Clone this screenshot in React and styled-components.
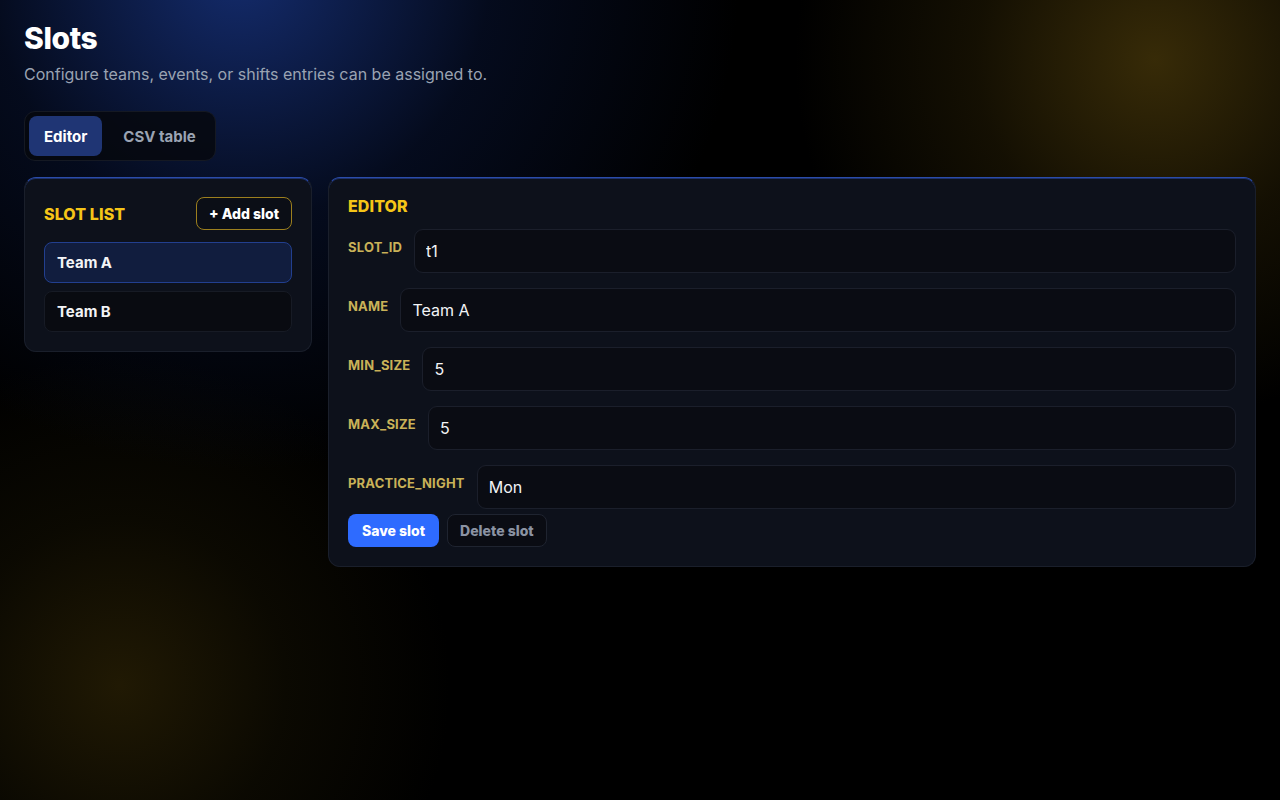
import React, { useState } from "react";
import styled, { createGlobalStyle } from "styled-components";

const GlobalStyle = createGlobalStyle`
  * { box-sizing: border-box; }
  html, body { margin: 0; padding: 0; background: #000; }
  body {
    font-family: Inter, "Noto Sans", "Liberation Sans", sans-serif;
    color: #f3f4f6;
    -webkit-font-smoothing: antialiased;
  }
`;

const Page = styled.div`
  min-height: 800px;
  padding: 20px 24px 24px;
  background:
    radial-gradient(circle 500px at 240px -30px, rgba(22, 48, 120, 0.9), rgba(10, 24, 64, 0.45) 50%, transparent 100%),
    radial-gradient(circle 360px at 1155px 60px, rgba(58, 45, 8, 0.95), rgba(40, 31, 5, 0.5) 50%, transparent 100%),
    radial-gradient(circle 330px at 120px 685px, rgba(36, 28, 4, 0.9), rgba(22, 18, 3, 0.5) 50%, transparent 100%),
    #000;
`;

const Title = styled.h1`
  margin: 0;
  font-size: 30px;
  line-height: 36px;
  font-weight: 800;
  color: #fff;
  letter-spacing: -0.4px;
`;

const Subtitle = styled.p`
  margin: 7px 0 0;
  font-size: 16px;
  line-height: 22px;
  color: #9aa3b2;
`;

const Tabs = styled.div`
  display: inline-flex;
  gap: 6px;
  margin-top: 26px;
  padding: 4px;
  border: 1px solid #151923;
  border-radius: 11px;
  background: rgba(6, 8, 14, 0.85);
`;

const Tab = styled.button`
  height: 40px;
  padding: 0 15px;
  border: none;
  border-radius: 8px;
  font-family: inherit;
  font-size: 15px;
  font-weight: 700;
  cursor: pointer;
  background: ${(p) => (p.$active ? "#1f3574" : "transparent")};
  color: ${(p) => (p.$active ? "#ffffff" : "#9aa3b2")};
`;

const Grid = styled.div`
  display: grid;
  grid-template-columns: 288px 1fr;
  gap: 16px;
  align-items: start;
  margin-top: 16px;
`;

const Card = styled.section`
  background: #0d111b;
  border: 1px solid #1a1f2b;
  border-top-color: #2b4cab;
  box-shadow: inset 0 1px 0 rgba(43, 76, 171, 0.55);
  border-radius: 12px;
  padding: 19px;
  display: flex;
  flex-direction: column;
`;

const CardHeader = styled.div`
  display: flex;
  align-items: center;
  justify-content: space-between;
`;

const Heading = styled.h2`
  margin: 0;
  font-size: 16px;
  line-height: 18px;
  font-weight: 800;
  color: #f5c518;
  letter-spacing: 0.1px;
  text-transform: uppercase;
`;

const OutlineButton = styled.button`
  height: 33px;
  padding: 0 12px;
  border-radius: 8px;
  border: 1px solid ${(p) => (p.$tone === "gold" ? "#9c7f1e" : "#1f2430")};
  background: ${(p) => (p.$tone === "gold" ? "#0b0e16" : "#0a0c13")};
  color: ${(p) => (p.$tone === "gold" ? "#ffffff" : "#8b93a3")};
  font-family: inherit;
  font-size: 14px;
  font-weight: 800;
  cursor: pointer;
`;

const PrimaryButton = styled.button`
  height: 33px;
  padding: 0 14px;
  border-radius: 8px;
  border: none;
  background: #2e6bff;
  color: #fff;
  font-family: inherit;
  font-size: 14px;
  font-weight: 800;
  cursor: pointer;
`;

const SlotList = styled.div`
  display: flex;
  flex-direction: column;
  gap: 8px;
  margin-top: 12px;
`;

const SlotItem = styled.button`
  height: 41px;
  padding: 0 12px;
  text-align: left;
  border-radius: 8px;
  border: 1px solid ${(p) => (p.$active ? "#223f8f" : "#171b25")};
  background: ${(p) => (p.$active ? "#111d3e" : "#090b11")};
  color: #f3f4f6;
  font-family: inherit;
  font-size: 15px;
  font-weight: 700;
  cursor: pointer;
`;

const Form = styled.div`
  display: flex;
  flex-direction: column;
  gap: 15px;
  margin-top: 14px;
`;

const Row = styled.label`
  display: flex;
  align-items: flex-start;
  gap: 12px;
`;

const FieldLabel = styled.span`
  padding-top: 11px;
  font-size: 13px;
  line-height: 14px;
  font-weight: 700;
  letter-spacing: 0.2px;
  color: #c9b258;
  white-space: nowrap;
`;

const Input = styled.input`
  flex: 1;
  min-width: 0;
  height: 44px;
  padding: 0 11px;
  border-radius: 9px;
  border: 1px solid #1b1f2b;
  background: #0a0c13;
  color: #f3f4f6;
  font-family: inherit;
  font-size: 16px;
  outline: none;
`;

const Actions = styled.div`
  display: flex;
  gap: 8px;
  margin-top: 5px;
`;

const fields = [
  ["slot_id", "t1"],
  ["name", "Team A"],
  ["min_size", "5"],
  ["max_size", "5"],
  ["practice_night", "Mon"],
];

export default function App() {
  const [tab, setTab] = useState("editor");
  const [selected, setSelected] = useState("Team A");
  const [values, setValues] = useState(Object.fromEntries(fields));

  return (
    <>
      <GlobalStyle />
      <Page>
        <Title>Slots</Title>
        <Subtitle>Configure teams, events, or shifts entries can be assigned to.</Subtitle>
        <Tabs>
          <Tab $active={tab === "editor"} onClick={() => setTab("editor")}>Editor</Tab>
          <Tab $active={tab === "csv"} onClick={() => setTab("csv")}>CSV table</Tab>
        </Tabs>
        <Grid>
          <Card>
            <CardHeader>
              <Heading>Slot list</Heading>
              <OutlineButton $tone="gold">+ Add slot</OutlineButton>
            </CardHeader>
            <SlotList>
              {["Team A", "Team B"].map((t) => (
                <SlotItem key={t} $active={selected === t} onClick={() => setSelected(t)}>
                  {t}
                </SlotItem>
              ))}
            </SlotList>
          </Card>
          <Card>
            <Heading>Editor</Heading>
            <Form>
              {fields.map(([key]) => (
                <Row key={key}>
                  <FieldLabel>{key.toUpperCase()}</FieldLabel>
                  <Input
                    value={values[key]}
                    onChange={(e) => setValues({ ...values, [key]: e.target.value })}
                  />
                </Row>
              ))}
            </Form>
            <Actions>
              <PrimaryButton>Save slot</PrimaryButton>
              <OutlineButton>Delete slot</OutlineButton>
            </Actions>
          </Card>
        </Grid>
      </Page>
    </>
  );
}
